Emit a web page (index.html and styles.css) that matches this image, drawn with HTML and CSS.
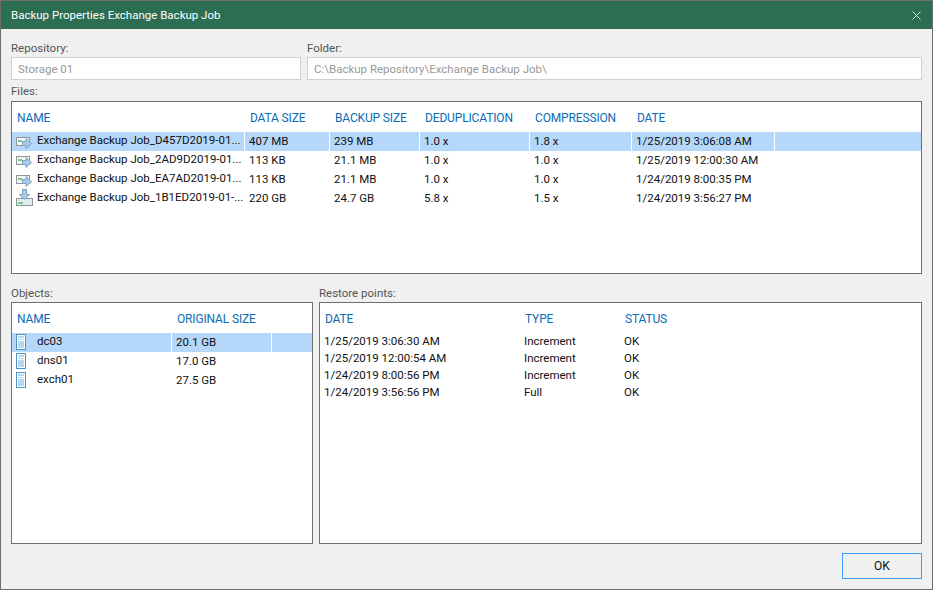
FILE: index.html
```html
<!DOCTYPE html>
<html lang="en">
<head>
<meta charset="utf-8">
<title>Backup Properties Exchange Backup Job</title>
<link rel="stylesheet" href="styles.css">
</head>
<body>
<svg class="defs" width="0" height="0" aria-hidden="true">
  <symbol id="inc" viewBox="0 0 18 16">
    <rect x="0.5" y="2.5" width="13" height="8" fill="#f2f4f5" stroke="#8f979c"/>
    <rect x="2" y="5" width="4" height="2" fill="#6fd08a"/>
    <path d="M6.500 6.500h3.500v-3l5.500 5-5.500 5v-3H6.500z" fill="#a9cbeb" stroke="#7f9fba"/>
  </symbol>
  <symbol id="full" viewBox="0 0 18 18">
    <rect x="0.500" y="9.500" width="16" height="7" fill="#e4ebf1" stroke="#8f979c"/>
    <rect x="2" y="13" width="5" height="2" fill="#6fd08a"/>
    <path d="M6.500 0.500h4v5h3l-5 5-5-5h3z" fill="#a9cbeb" stroke="#7f9fba"/>
  </symbol>
  <symbol id="vm" viewBox="0 0 10 16">
    <rect x="0.500" y="0.500" width="9" height="15" fill="#fff" stroke="#4b94c6"/>
    <rect x="2" y="2" width="6" height="2" fill="#b9d6f0"/>
    <rect x="2" y="5" width="6" height="1" fill="#b9d6f0"/>
    <rect x="2" y="7" width="6" height="7" fill="#b9d6f0"/>
  </symbol>
</svg>
<main class="window">
  <header class="titlebar">
    <h1 class="title">Backup Properties Exchange Backup Job</h1>
    <svg class="close" width="9" height="9" viewBox="0 0 9 9" aria-label="Close"><path d="M0.500 0.500l8 8M8.500 0.500l-8 8" stroke="#d5e2dc" stroke-width="1" fill="none"/></svg>
  </header>
  <div class="content">
    <div class="fields">
      <div class="field field-repo">
        <div class="label">Repository:</div>
        <div class="input">Storage 01</div>
      </div>
      <div class="field field-folder">
        <div class="label">Folder:</div>
        <div class="input">C:\Backup Repository\Exchange Backup Job\</div>
      </div>
    </div>
    <div class="label label-files">Files:</div>
    <section class="panel panel-files">
      <div class="row head cols-files">
        <span>NAME</span><span>DATA SIZE</span><span>BACKUP SIZE</span><span>DEDUPLICATION</span><span>COMPRESSION</span><span>DATE</span><span></span>
      </div>
      <div class="row cols-files sel">
        <span class="namecell"><svg class="ico-file"><use href="#inc"/></svg><span class="nametext">Exchange Backup Job_D457D2019-01...</span></span><span>407 MB</span><span>239 MB</span><span>1.0 x</span><span>1.8 x</span><span>1/25/2019 3:06:08 AM</span><span></span>
      </div>
      <div class="row cols-files">
        <span class="namecell"><svg class="ico-file"><use href="#inc"/></svg><span class="nametext">Exchange Backup Job_2AD9D2019-01...</span></span><span>113 KB</span><span>21.1 MB</span><span>1.0 x</span><span>1.0 x</span><span>1/25/2019 12:00:30 AM</span><span></span>
      </div>
      <div class="row cols-files">
        <span class="namecell"><svg class="ico-file"><use href="#inc"/></svg><span class="nametext">Exchange Backup Job_EA7AD2019-01...</span></span><span>113 KB</span><span>21.1 MB</span><span>1.0 x</span><span>1.0 x</span><span>1/24/2019 8:00:35 PM</span><span></span>
      </div>
      <div class="row cols-files">
        <span class="namecell"><svg class="ico-full"><use href="#full"/></svg><span class="nametext">Exchange Backup Job_1B1ED2019-01-...</span></span><span>220 GB</span><span>24.7 GB</span><span>5.8 x</span><span>1.5 x</span><span>1/24/2019 3:56:27 PM</span><span></span>
      </div>
    </section>
    <div class="lower">
      <div class="col col-objects">
        <div class="label">Objects:</div>
        <section class="panel panel-lower">
          <div class="row head cols-objects">
            <span>NAME</span><span>ORIGINAL SIZE</span><span></span>
          </div>
          <div class="row cols-objects sel">
            <span class="namecell"><svg class="ico-vm"><use href="#vm"/></svg><span class="nametext">dc03</span></span><span>20.1 GB</span><span></span>
          </div>
          <div class="row cols-objects">
            <span class="namecell"><svg class="ico-vm"><use href="#vm"/></svg><span class="nametext">dns01</span></span><span>17.0 GB</span><span></span>
          </div>
          <div class="row cols-objects">
            <span class="namecell"><svg class="ico-vm"><use href="#vm"/></svg><span class="nametext">exch01</span></span><span>27.5 GB</span><span></span>
          </div>
        </section>
      </div>
      <div class="col col-points">
        <div class="label">Restore points:</div>
        <section class="panel panel-lower">
          <div class="row head cols-points">
            <span>DATE</span><span>TYPE</span><span>STATUS</span>
          </div>
          <div class="row short cols-points"><span>1/25/2019 3:06:30 AM</span><span>Increment</span><span>OK</span></div>
          <div class="row short cols-points"><span>1/25/2019 12:00:54 AM</span><span>Increment</span><span>OK</span></div>
          <div class="row short cols-points"><span>1/24/2019 8:00:56 PM</span><span>Increment</span><span>OK</span></div>
          <div class="row short cols-points"><span>1/24/2019 3:56:56 PM</span><span>Full</span><span>OK</span></div>
        </section>
      </div>
    </div>
    <footer class="actions">
      <button class="ok" type="button">OK</button>
    </footer>
  </div>
</main>
</body>
</html>
```
FILE: styles.css
```css
* { box-sizing: border-box; }
html, body { margin: 0; padding: 0; }
body {
  width: 933px;
  height: 590px;
  overflow: hidden;
  font-family: Roboto, "Open Sans", sans-serif;
  font-size: 11.5px;
  color: #111;
  background: #f0f0f0;
}
.defs { display: block; width: 0; height: 0; }
.window {
  width: 933px;
  height: 590px;
  display: flex;
  flex-direction: column;
  border: 1px solid #6e6e6e;
  background: #f0f0f0;
}
.titlebar {
  flex: none;
  height: 28px;
  display: flex;
  align-items: center;
  justify-content: space-between;
  padding: 0 11px 0 10px;
  background: #2b6e52;
}
.title {
  margin: 0;
  font-size: 11.5px;
  font-weight: 400;
  color: #fff;
}
.content {
  flex: 1;
  display: flex;
  flex-direction: column;
  padding: 10px 10px 10px 10px;
}
.label { height: 18px; line-height: 18px; color: #555; }
.fields { display: flex; gap: 6px; }
.field-repo { width: 290px; }
.field-folder { flex: 1; }
.input {
  height: 23px;
  line-height: 23px;
  padding-left: 6px;
  background: #fff;
  border: 1px solid #d0d0d0;
  color: #999;
}
.label-files { margin-top: 1px; height: 20px; line-height: 20px; }
.panel {
  background: #fff;
  border: 1px solid #6e6e6e;
  padding-top: 1px;
}
.panel-files { height: 173px; }
.lower { display: flex; gap: 6px; margin-top: 10px; }
.col-objects { width: 302px; }
.col-points { flex: 1; }
.panel-lower { height: 242px; }
.row { display: grid; height: 19px; line-height: 18px; white-space: nowrap; }
.row.short { height: 17px; line-height: 17px; }
.row.head { height: 29px; line-height: 31px; color: #0a6cb4; font-size: 12px; letter-spacing: -0.15px; }
.row > span { padding-left: 4px; overflow: hidden; }
.sel > span { background: #b5d7f9; }
.cols-files { grid-template-columns: 232px 84px 89px 109px 101px 142px 1fr; column-gap: 1px; }
.cols-objects { grid-template-columns: 159px 99px 1fr; column-gap: 1px; }
.cols-points { grid-template-columns: 200px 100px 1fr; }
.head > span { padding-left: 5px; }
.namecell { display: flex; align-items: flex-start; }
.nametext { line-height: 16px; }
.ico-file { flex: none; width: 18px; height: 16px; margin-right: 3px; margin-top: 3px; }
.ico-full { flex: none; width: 18px; height: 18px; margin-right: 3px; }
.ico-vm { flex: none; width: 10px; height: 16px; margin-top: 1px; margin-right: 11px; }
.actions { display: flex; justify-content: flex-end; margin-top: 9px; }
.ok {
  width: 80px;
  height: 26px;
  padding: 0;
  font: inherit;
  font-size: 12px;
  color: #111;
  background: #f0f0f0;
  border: 1px solid #3d9bff;
}
```
